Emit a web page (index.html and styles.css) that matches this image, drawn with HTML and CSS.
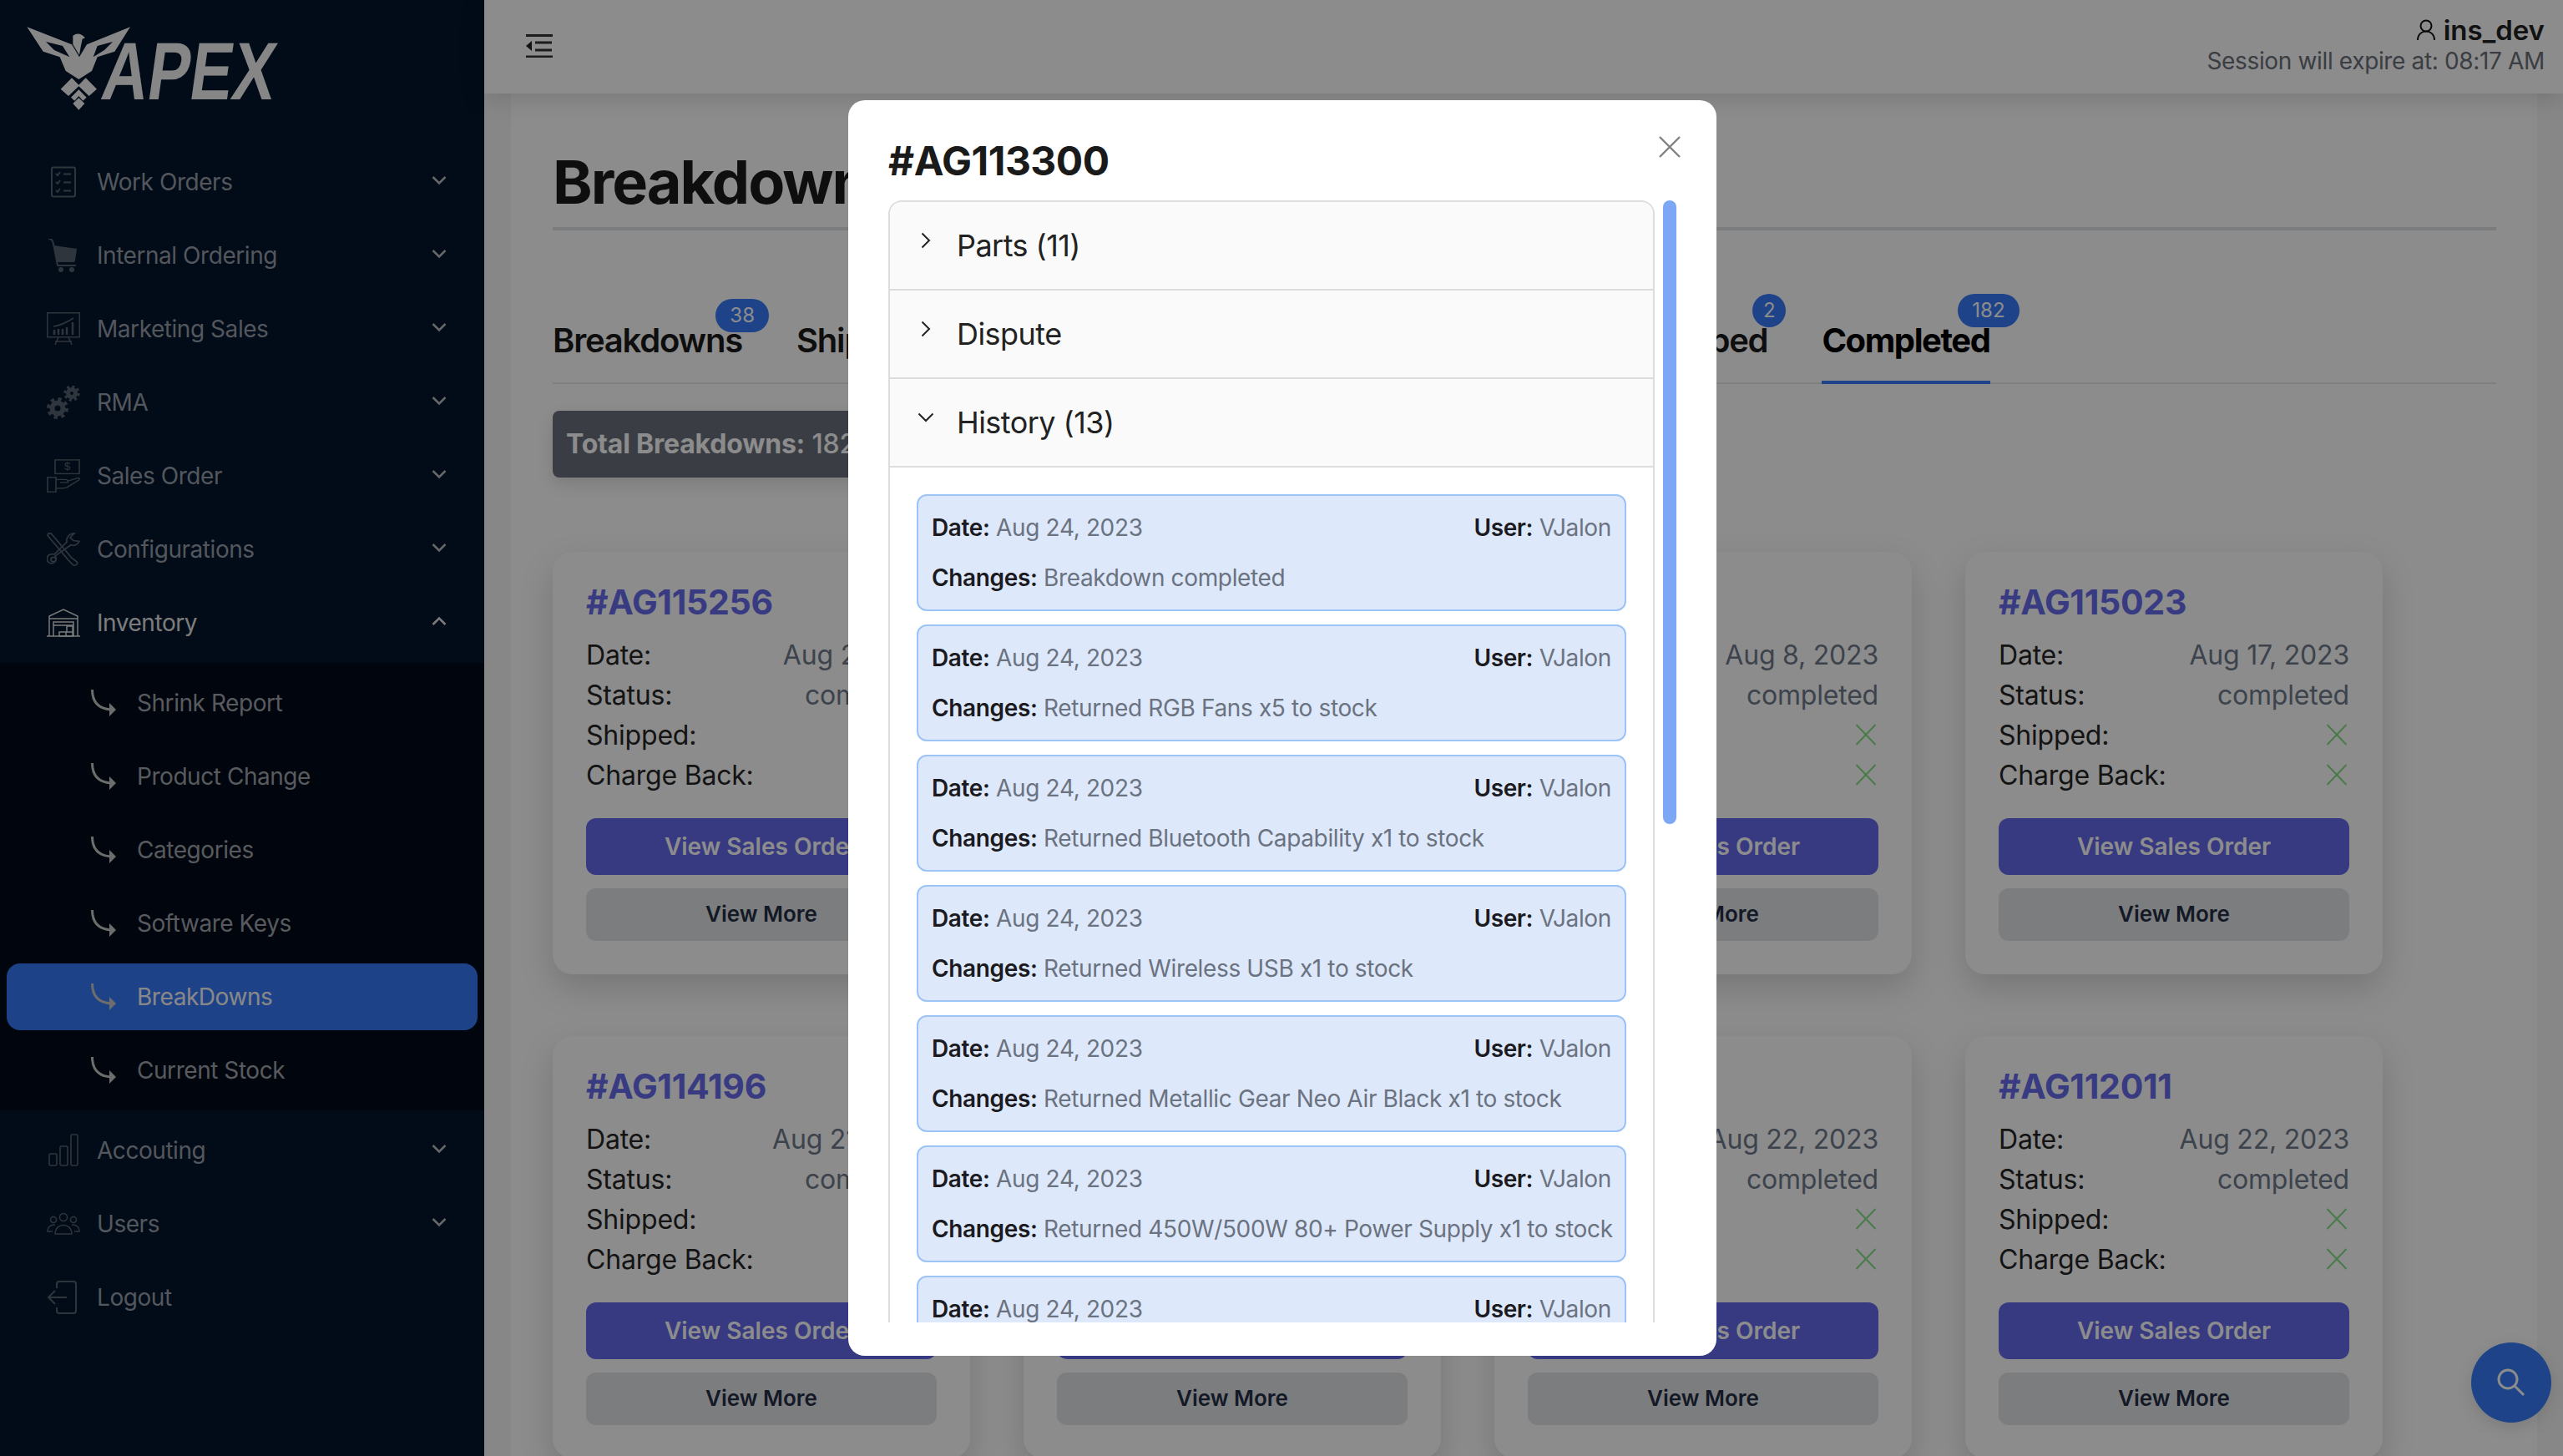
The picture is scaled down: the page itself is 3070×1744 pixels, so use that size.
FILE: index.html
```html
<!DOCTYPE html>
<html lang="en">
<head>
  <meta charset="UTF-8" />
  <title>Breakdowns</title>
  <link rel="stylesheet" href="styles.css">
</head>
<body>
  <svg class="defs" width="0" height="0">
    <symbol id="chev-down" viewBox="0 0 18 12"><path d="M1.500 2 9 9.500 16.500 2" fill="none" stroke="currentColor" stroke-width="2.600"/></symbol>
    <symbol id="chev-up" viewBox="0 0 18 12"><path d="M1.500 10 9 2.500 16.500 10" fill="none" stroke="currentColor" stroke-width="2.600"/></symbol>
    <symbol id="sub-arrow" viewBox="0 0 30 32"><path d="M1.500 0C1.500 14 8 23 24 24" fill="none" stroke="currentColor" stroke-width="3"/><path d="M22 16l8 8-8 8z" fill="currentColor"/></symbol>
    <symbol id="x-mark" viewBox="0 0 26 26"><path d="M1.500 1 24.500 25M24.500 1 1.500 25" fill="none" stroke="currentColor" stroke-width="2"/></symbol>
  </svg>

  <aside class="sidebar">
    <div class="logo">
      <svg viewBox="0 0 1080 450" width="360" height="150">
        <path fill-rule="evenodd" d="M97 97 258 160 285 205 312 160 468 97 412 185 350 205 330 255 283 285 236 255 215 205 155 185ZM165 150 195 180 250 205 225 165ZM405 150 350 165 335 205 375 180Z"/>
        <path d="M262 128Q285 112 306 136L296 140Q290 165 285 198L262 160Z"/>
        <path d="M218 320 258 280 283 305 308 280 348 320 320 345 283 310 246 345Z"/>
        <path d="M255 350 283 322 311 350 298 362 283 345 268 362Z"/>
        <path d="M283 395 262 372 283 352 304 372Z"/>
        <text class="logo-word" x="407" y="357" textLength="620" lengthAdjust="spacingAndGlyphs" transform="skewX(-8)">APEX</text>
      </svg>
    </div>
    <nav>
      <a class="nav-item">
        <svg class="nav-icon" viewBox="0 0 40 40"><g fill="none" stroke="currentColor" stroke-width="2"><rect x="6" y="2.500" width="28" height="35" rx="2"/><path d="M11 10l2 2 3-4M11 20l2 2 3-4M11 30l2 2 3-4M20 10.500h9M20 20.500h9M20 30.500h9"/></g></svg>
        <span>Work Orders</span><svg class="nav-chev"><use href="#chev-down"/></svg>
      </a>
      <a class="nav-item">
        <svg class="nav-icon" viewBox="0 0 40 40"><path d="M8 8l28 4-2 14-1 2H13z" fill="currentColor"/><path d="M2 0c4 0 5 2 6 6l5 26h22" fill="none" stroke="currentColor" stroke-width="2"/><circle cx="17" cy="37" r="3" fill="currentColor"/><circle cx="30" cy="37" r="3" fill="currentColor"/></svg>
        <span>Internal Ordering</span><svg class="nav-chev"><use href="#chev-down"/></svg>
      </a>
      <a class="nav-item">
        <svg class="nav-icon" viewBox="0 0 40 40"><g fill="none" stroke="currentColor" stroke-width="1.500"><rect x=".8" y=".8" width="38.400" height="29"/><path d="M14 30l-4 9M26 30l4 9M10 35h20M8 17c9-1 16-5 24-10"/><path stroke-width="2.500" d="M9 27v-6M14 27v-7M19 27v-7M24 27v-9M31 27V12"/></g></svg>
        <span>Marketing Sales</span><svg class="nav-chev"><use href="#chev-down"/></svg>
      </a>
      <a class="nav-item">
        <svg class="nav-icon" viewBox="0 0 40 40"><g fill="none" stroke="currentColor"><circle cx="13" cy="27" r="6.500" stroke-width="6"/><circle cx="13" cy="27" r="11" stroke-width="4" stroke-dasharray="4.300 4.340"/><circle cx="30" cy="9" r="4.500" stroke-width="5"/><circle cx="30" cy="9" r="8" stroke-width="3.400" stroke-dasharray="3.100 3.180"/></g></svg>
        <span>RMA</span><svg class="nav-chev"><use href="#chev-down"/></svg>
      </a>
      <a class="nav-item">
        <svg class="nav-icon" viewBox="0 0 40 46" preserveAspectRatio="none"><g fill="none" stroke="currentColor" stroke-width="1.600"><rect x="10" y="1" width="29" height="19"/><rect x="1" y="25" width="10" height="20"/><path d="M11 28h11c3 0 4 2 3 4h-9M25 30l12-4c2-1 3 1 1 3L24 39c-5 2-9 1-13 1"/></g><text class="bill" x="24.500" y="15.500">$</text></svg>
        <span>Sales Order</span><svg class="nav-chev"><use href="#chev-down"/></svg>
      </a>
      <a class="nav-item">
        <svg class="nav-icon" viewBox="0 0 40 46" preserveAspectRatio="none"><g fill="none" stroke="currentColor" stroke-width="1.800"><path d="M2 1l3 0 6 8 19 26 6 5c2 3-2 7-5 4l-5-6L7 12 1 4z"/><path d="M39 12c-1 4-6 7-10 5L10 32c3 5-1 12-6 10s-5-11 1-12c2-1 4 0 4 0L24 13c-1-6 3-12 9-12l-5 6 4 4z"/><circle cx="8" cy="37" r="3"/></g></svg>
        <span>Configurations</span><svg class="nav-chev"><use href="#chev-down"/></svg>
      </a>
      <a class="nav-item nav-item-open">
        <svg class="nav-icon" viewBox="0 0 40 34"><g fill="none" stroke="currentColor" stroke-width="1.500"><path d="M0 33h40M3 33V9L20 1l17 8v24M3 12h34M8 33V16h24v17M8 20h24"/><path d="M24 21h7v7h-7zM15 28h8v5h-8zM23 28h8v5h-8z"/></g></svg>
        <span>Inventory</span><svg class="nav-chev"><use href="#chev-up"/></svg>
      </a>
      <div class="subnav">
        <a class="sub-item"><svg class="sub-icon"><use href="#sub-arrow"/></svg><span>Shrink Report</span></a>
        <a class="sub-item"><svg class="sub-icon"><use href="#sub-arrow"/></svg><span>Product Change</span></a>
        <a class="sub-item"><svg class="sub-icon"><use href="#sub-arrow"/></svg><span>Categories</span></a>
        <a class="sub-item"><svg class="sub-icon"><use href="#sub-arrow"/></svg><span>Software Keys</span></a>
        <a class="sub-item sub-active"><svg class="sub-icon"><use href="#sub-arrow"/></svg><span>BreakDowns</span></a>
        <a class="sub-item"><svg class="sub-icon"><use href="#sub-arrow"/></svg><span>Current Stock</span></a>
      </div>
      <a class="nav-item">
        <svg class="nav-icon" viewBox="0 0 40 40"><g fill="none" stroke="currentColor" stroke-width="1.600"><rect x="3" y="24" width="9" height="14" rx="1.500"/><rect x="16" y="15" width="9" height="23" rx="1.500"/><rect x="29" y="1" width="8" height="37" rx="1.500"/></g></svg>
        <span>Accouting</span><svg class="nav-chev"><use href="#chev-down"/></svg>
      </a>
      <a class="nav-item">
        <svg class="nav-icon" viewBox="0 0 40 26"><g fill="none" stroke="currentColor" stroke-width="1.500"><circle cx="20" cy="5" r="4.500"/><circle cx="8" cy="8" r="3.500"/><circle cx="32" cy="8" r="3.500"/><path d="M10 25c0-14 20-14 20 0zM7 22H1c0-5 3-8 9-8M33 22h6c0-5-3-8-9-8"/></g></svg>
        <span>Users</span><svg class="nav-chev"><use href="#chev-down"/></svg>
      </a>
      <a class="nav-item">
        <svg class="nav-icon" viewBox="0 0 40 40"><g fill="none" stroke="currentColor" stroke-width="2"><path d="M12 9V4c0-2 1-3 3-3h17c2 0 3 1 3 3v32c0 2-1 3-3 3H15c-2 0-3-1-3-3v-4M24 20H3M10 12l-8 8 8 8"/></g></svg>
        <span>Logout</span>
      </a>
    </nav>
  </aside>

  <div class="main">
    <header class="topbar">
      <svg class="menu-btn" viewBox="0 0 32 28" width="32" height="28"><path d="M0 1.500h32M11 10h20M11 19h20M0 27h32" stroke="#333" stroke-width="3"/><path d="M0 14l7-6v12z" fill="#222"/></svg>
      <div class="session">
        <div class="session-user">
          <svg viewBox="0 0 24 26" width="24" height="26"><g fill="none" stroke="#111" stroke-width="2"><circle cx="12" cy="8" r="6.500"/><path d="M2 25c0-14 20-14 20 0"/></g></svg>
          <b>ins_dev</b>
        </div>
        <div class="session-time">Session will expire at: 08:17 AM</div>
      </div>
    </header>

    <main class="page">
      <h1 class="page-title">Breakdowns</h1>

      <div class="tabs">
        <a class="tab tab-first">Breakdowns<span class="badge">38</span></a>
        <a class="tab">Shipped<span class="badge">12</span></a>
        <a class="tab">Disputed<span class="badge">4</span></a>
        <a class="tab tab-wide">Scrapped<span class="badge badge-round">2</span></a>
        <a class="tab tab-active">Completed<span class="badge">182</span></a>
      </div>

      <div class="total-bar"><b>Total Breakdowns:</b> 182</div>

      <section class="cards">
        <article class="card">
          <h3>#AG115256</h3>
          <div class="card-row"><span>Date:</span><em>Aug 2, 2023</em></div>
          <div class="card-row"><span>Status:</span><em>completed</em></div>
          <div class="card-row"><span>Shipped:</span><svg class="x-ok"><use href="#x-mark"/></svg></div>
          <div class="card-row"><span>Charge Back:</span><svg class="x-ok"><use href="#x-mark"/></svg></div>
          <a class="btn btn-primary">View Sales Order</a>
          <a class="btn btn-grey">View More</a>
        </article>
        <article class="card">
          <h3>#AG115240</h3>
          <div class="card-row"><span>Date:</span><em>Aug 9, 2023</em></div>
          <div class="card-row"><span>Status:</span><em>completed</em></div>
          <div class="card-row"><span>Shipped:</span><svg class="x-ok"><use href="#x-mark"/></svg></div>
          <div class="card-row"><span>Charge Back:</span><svg class="x-ok"><use href="#x-mark"/></svg></div>
          <a class="btn btn-primary">View Sales Order</a>
          <a class="btn btn-grey">View More</a>
        </article>
        <article class="card">
          <h3>#AG115118</h3>
          <div class="card-row"><span>Date:</span><em>Aug 8, 2023</em></div>
          <div class="card-row"><span>Status:</span><em>completed</em></div>
          <div class="card-row"><span>Shipped:</span><svg class="x-ok"><use href="#x-mark"/></svg></div>
          <div class="card-row"><span>Charge Back:</span><svg class="x-ok"><use href="#x-mark"/></svg></div>
          <a class="btn btn-primary">View Sales Order</a>
          <a class="btn btn-grey">View More</a>
        </article>
        <article class="card">
          <h3>#AG115023</h3>
          <div class="card-row"><span>Date:</span><em>Aug 17, 2023</em></div>
          <div class="card-row"><span>Status:</span><em>completed</em></div>
          <div class="card-row"><span>Shipped:</span><svg class="x-ok"><use href="#x-mark"/></svg></div>
          <div class="card-row"><span>Charge Back:</span><svg class="x-ok"><use href="#x-mark"/></svg></div>
          <a class="btn btn-primary">View Sales Order</a>
          <a class="btn btn-grey">View More</a>
        </article>
        <article class="card">
          <h3>#AG114196</h3>
          <div class="card-row"><span>Date:</span><em>Aug 21, 2023</em></div>
          <div class="card-row"><span>Status:</span><em>completed</em></div>
          <div class="card-row"><span>Shipped:</span><svg class="x-ok"><use href="#x-mark"/></svg></div>
          <div class="card-row"><span>Charge Back:</span><svg class="x-ok"><use href="#x-mark"/></svg></div>
          <a class="btn btn-primary">View Sales Order</a>
          <a class="btn btn-grey">View More</a>
        </article>
        <article class="card">
          <h3>#AG113300</h3>
          <div class="card-row"><span>Date:</span><em>Aug 24, 2023</em></div>
          <div class="card-row"><span>Status:</span><em>completed</em></div>
          <div class="card-row"><span>Shipped:</span><svg class="x-ok"><use href="#x-mark"/></svg></div>
          <div class="card-row"><span>Charge Back:</span><svg class="x-ok"><use href="#x-mark"/></svg></div>
          <a class="btn btn-primary">View Sales Order</a>
          <a class="btn btn-grey">View More</a>
        </article>
        <article class="card">
          <h3>#AG112240</h3>
          <div class="card-row"><span>Date:</span><em>Aug 22, 2023</em></div>
          <div class="card-row"><span>Status:</span><em>completed</em></div>
          <div class="card-row"><span>Shipped:</span><svg class="x-ok"><use href="#x-mark"/></svg></div>
          <div class="card-row"><span>Charge Back:</span><svg class="x-ok"><use href="#x-mark"/></svg></div>
          <a class="btn btn-primary">View Sales Order</a>
          <a class="btn btn-grey">View More</a>
        </article>
        <article class="card">
          <h3>#AG112011</h3>
          <div class="card-row"><span>Date:</span><em>Aug 22, 2023</em></div>
          <div class="card-row"><span>Status:</span><em>completed</em></div>
          <div class="card-row"><span>Shipped:</span><svg class="x-ok"><use href="#x-mark"/></svg></div>
          <div class="card-row"><span>Charge Back:</span><svg class="x-ok"><use href="#x-mark"/></svg></div>
          <a class="btn btn-primary">View Sales Order</a>
          <a class="btn btn-grey">View More</a>
        </article>
      </section>
    </main>
  </div>

  <button class="fab">
    <svg viewBox="0 0 34 34" width="34" height="34"><g fill="none" stroke="#fff" stroke-width="3"><circle cx="13" cy="13" r="11"/><path d="M21 21l11 11"/></g></svg>
  </button>

  <div class="backdrop"></div>

  <div class="modal">
    <svg class="modal-close" viewBox="0 0 26 26" width="26" height="26"><path d="M1 1l24 24M25 1 1 25" stroke="#808080" stroke-width="2.400"/></svg>
    <h2 class="modal-title">#AG113300</h2>
    <div class="modal-body">
      <div class="accordion">
        <div class="acc-head">
          <svg class="acc-chev" viewBox="0 0 12 20" width="12" height="20"><path d="M1.500 1.500 10 10l-8.500 8.500" fill="none" stroke="#222" stroke-width="2"/></svg>
          <span>Parts (11)</span>
        </div>
        <div class="acc-head">
          <svg class="acc-chev" viewBox="0 0 12 20" width="12" height="20"><path d="M1.500 1.500 10 10l-8.500 8.500" fill="none" stroke="#222" stroke-width="2"/></svg>
          <span>Dispute</span>
        </div>
        <div class="acc-head">
          <svg class="acc-chev acc-chev-open" viewBox="0 0 20 12" width="20" height="12"><path d="M1.500 1.500 10 10l8.500-8.500" fill="none" stroke="#222" stroke-width="2"/></svg>
          <span>History (13)</span>
        </div>
        <div class="acc-body">
          <div class="hist-item">
            <div class="hist-row"><span><b>Date:</b> Aug 24, 2023</span><span><b>User:</b> VJalon</span></div>
            <div class="hist-row"><span><b>Changes:</b> Breakdown completed</span></div>
          </div>
          <div class="hist-item">
            <div class="hist-row"><span><b>Date:</b> Aug 24, 2023</span><span><b>User:</b> VJalon</span></div>
            <div class="hist-row"><span><b>Changes:</b> Returned RGB Fans x5 to stock</span></div>
          </div>
          <div class="hist-item">
            <div class="hist-row"><span><b>Date:</b> Aug 24, 2023</span><span><b>User:</b> VJalon</span></div>
            <div class="hist-row"><span><b>Changes:</b> Returned Bluetooth Capability x1 to stock</span></div>
          </div>
          <div class="hist-item">
            <div class="hist-row"><span><b>Date:</b> Aug 24, 2023</span><span><b>User:</b> VJalon</span></div>
            <div class="hist-row"><span><b>Changes:</b> Returned Wireless USB x1 to stock</span></div>
          </div>
          <div class="hist-item">
            <div class="hist-row"><span><b>Date:</b> Aug 24, 2023</span><span><b>User:</b> VJalon</span></div>
            <div class="hist-row"><span><b>Changes:</b> Returned Metallic Gear Neo Air Black x1 to stock</span></div>
          </div>
          <div class="hist-item">
            <div class="hist-row"><span><b>Date:</b> Aug 24, 2023</span><span><b>User:</b> VJalon</span></div>
            <div class="hist-row"><span><b>Changes:</b> Returned 450W/500W 80+ Power Supply x1 to stock</span></div>
          </div>
          <div class="hist-item">
            <div class="hist-row"><span><b>Date:</b> Aug 24, 2023</span><span><b>User:</b> VJalon</span></div>
          </div>
        </div>
      </div>
      <div class="scroll-thumb"></div>
    </div>
  </div>
</body>
</html>
```

FILE: styles.css
```css
html, body {
  margin: 0;
  padding: 0;
  height: 100%;
  overflow: hidden;
}
body {
  display: flex;
  position: relative;
  font-family: Inter, "Noto Sans", sans-serif;
  background: #f6f6f6;
  color: #1a1a1a;
}
.defs {
  position: absolute;
}

/* sidebar */
.sidebar {
  width: 580px;
  flex: none;
  background: #02162c;
}
.logo {
  height: 174px;
}
.logo svg {
  display: block;
  fill: #f5f5f5;
}
.logo-word {
  font-family: "Liberation Sans", sans-serif;
  font-weight: 700;
  font-size: 293px;
}
.nav-item {
  height: 88px;
  display: flex;
  align-items: center;
  padding: 0 45px 0 56px;
  font-size: 28px;
  letter-spacing: -0.45px;
  color: #979ea9;
}
.nav-icon {
  width: 40px;
  height: 40px;
  flex: none;
  margin-right: 20px;
  color: #57616f;
}
.nav-chev {
  width: 18px;
  height: 12px;
  margin-left: auto;
  margin-bottom: 4px;
  color: #b8bcc4;
}
.nav-item-open {
  color: #e2e2e2;
}
.nav-item-open .nav-icon,
.nav-item-open .nav-chev {
  color: #e0e0e0;
}
.bill {
  font-size: 13px;
  font-family: Inter, sans-serif;
  text-anchor: middle;
  fill: currentColor;
}
.subnav {
  margin: 4px 0;
  padding: 4px 8px;
  background: #020a1b;
}
.sub-item {
  height: 88px;
  display: flex;
  align-items: center;
  padding-left: 101px;
  font-size: 28px;
  letter-spacing: -0.45px;
  color: #a0a4aa;
  border-radius: 16px;
  box-sizing: border-box;
}
.sub-icon {
  width: 30px;
  height: 32px;
  margin-right: 25px;
  color: #c6c6c6;
}
.sub-active {
  background: #3779f8;
  height: 80px;
  margin: 4px 0;
  color: #f8f8f8;
}

/* header + page */
.main {
  flex: 1;
  min-width: 0;
}
.topbar {
  height: 112px;
  background: #fff;
  display: flex;
  align-items: center;
  justify-content: space-between;
  padding: 0 22px 0 50px;
  box-shadow: 0 4px 30px rgba(0, 0, 0, 0.16);
  position: relative;
}
.menu-btn {
  margin-top: -2px;
}
.session {
  text-align: right;
  margin-top: -3px;
}
.session-user {
  display: flex;
  justify-content: flex-end;
  align-items: center;
  gap: 9px;
  font-size: 33px;
  line-height: 38px;
  color: #222;
}
.session-user b {
  font-weight: 600;
}
.session-time {
  font-size: 28px;
  line-height: 37px;
  letter-spacing: -0.35px;
  color: #6b7078;
}
.page {
  margin: 0 31px 0 32px;
  padding: 66px 49px 0 50px;
  background: #fff;
  height: 1632px;
  box-sizing: border-box;
}
.page-title {
  margin: 0;
  font-size: 72px;
  line-height: 80px;
  font-weight: 700;
  letter-spacing: -2px;
  padding-bottom: 14px;
  border-bottom: 4px solid #dfe0e3;
  color: #1b1b1b;
}
.tabs {
  display: flex;
  gap: 65px;
  margin-top: 108px;
  border-bottom: 2px solid #e8e8e8;
  height: 74px;
}
.tab {
  position: relative;
  font-size: 40px;
  line-height: 48px;
  font-weight: 600;
  letter-spacing: -1.2px;
  color: #1b1b1b;
  height: 76px;
  box-sizing: border-box;
}
.tab-wide {
  margin-left: 542px;
}
.tab-active {
  color: #000;
  font-weight: 700;
  letter-spacing: -1.4px;
  border-bottom: 4px solid #3a7dfa;
}
.badge {
  position: absolute;
  top: -32px;
  right: -35px;
  height: 40px;
  min-width: 40px;
  box-sizing: border-box;
  padding: 0 17px;
  border-radius: 20px;
  background: #377bf8;
  color: #fff;
  font-size: 24px;
  line-height: 40px;
  font-weight: 400;
  letter-spacing: 0;
  text-align: center;
}
.tab-first .badge {
  top: -26px;
  right: -32px;
}
.badge-round {
  padding: 0;
  right: -22px;
}
.total-bar {
  display: inline-block;
  margin-top: 32px;
  width: 500px;
  height: 80px;
  line-height: 80px;
  box-sizing: border-box;
  padding: 0 16px;
  background: #6b717d;
  border-radius: 8px;
  color: #fff;
  font-size: 32px;
  font-weight: 500;
  letter-spacing: -0.2px;
  box-shadow: 0 8px 20px rgba(0, 0, 0, 0.12);
  vertical-align: top;
}
.total-bar b {
  font-weight: 700;
}
.cards {
  display: grid;
  grid-template-columns: repeat(4, 500px);
  gap: 74px 64px;
  margin-top: 89px;
}
.card {
  height: 506px;
  box-sizing: border-box;
  padding: 40px;
  background: #fff;
  border-radius: 24px;
  box-shadow: 0 16px 40px rgba(0, 0, 0, 0.16);
}
.card h3 {
  margin: 0 0 19px;
  font-size: 41px;
  line-height: 40px;
  font-weight: 700;
  letter-spacing: -0.3px;
  color: #676ceb;
}
.card-row {
  display: flex;
  justify-content: space-between;
  align-items: center;
  height: 48px;
  font-size: 32px;
  letter-spacing: -0.2px;
  color: #252525;
}
.card-row em {
  font-style: normal;
  color: #707a8a;
}
.x-ok {
  width: 26px;
  height: 26px;
  margin-right: 2px;
  color: #86e086;
}
.btn {
  display: block;
  text-align: center;
  font-size: 28px;
  font-weight: 600;
  border-radius: 12px;
}
.btn-primary {
  margin-top: 28px;
  height: 68px;
  line-height: 68px;
  background: #646aec;
  color: #fff;
}
.btn-grey {
  margin-top: 16px;
  height: 63px;
  line-height: 61px;
  font-size: 26px;
  background: #e2e3e8;
  color: #252e45;
}
.fab {
  position: absolute;
  left: 2960px;
  top: 1608px;
  width: 96px;
  height: 96px;
  padding: 0;
  border: 0;
  border-radius: 50%;
  background: #377bf8;
  display: flex;
  align-items: center;
  justify-content: center;
  box-shadow: 0 6px 20px rgba(0, 0, 0, 0.12);
}

/* modal over the dimmed page */
.backdrop {
  position: absolute;
  inset: 0;
  background: rgba(0, 0, 0, 0.45);
}
.modal {
  position: absolute;
  left: 1016px;
  top: 120px;
  width: 1040px;
  height: 1504px;
  box-sizing: border-box;
  background: #fff;
  border-radius: 20px;
  padding: 41px 48px 0 48px;
}
.modal-close {
  position: absolute;
  top: 43px;
  right: 43px;
}
.modal-title {
  margin: 0 0 15px;
  font-size: 48px;
  line-height: 64px;
  font-weight: 700;
  letter-spacing: -0.5px;
  color: #1a1a1a;
}
.modal-body {
  display: flex;
  gap: 10px;
  align-items: flex-start;
  height: 1344px;
}
.accordion {
  width: 918px;
  flex: none;
  height: 1344px;
  overflow: hidden;
  box-sizing: border-box;
  border: 2px solid #dddddd;
  border-bottom: 0;
  border-radius: 16px 16px 0 0;
}
.acc-head {
  height: 106px;
  box-sizing: border-box;
  padding-left: 37px;
  display: flex;
  align-items: center;
  background: #fafafa;
  border-bottom: 2px solid #dddddd;
  font-size: 36px;
  letter-spacing: -0.55px;
  color: #222;
}
.acc-chev {
  margin-top: -12px;
  margin-right: 31px;
}
.acc-chev-open {
  margin-left: -4px;
  margin-right: 27px;
}
.acc-body {
  padding: 32px 32px 32px 32px;
}
.hist-item {
  box-sizing: border-box;
  height: 140px;
  margin-bottom: 16px;
  padding: 16px;
  background: #dde8fa;
  border: 2px solid #9cc3f5;
  border-radius: 12px;
}
.hist-row {
  display: flex;
  justify-content: space-between;
  font-size: 28px;
  line-height: 44px;
  letter-spacing: -0.36px;
  white-space: nowrap;
  margin-bottom: 16px;
  color: #6b7280;
}
.hist-row b {
  font-weight: 600;
  color: #1a1a1f;
}
.scroll-thumb {
  width: 16px;
  height: 747px;
  background: #7ba7f5;
  border-radius: 8px;
}
```
